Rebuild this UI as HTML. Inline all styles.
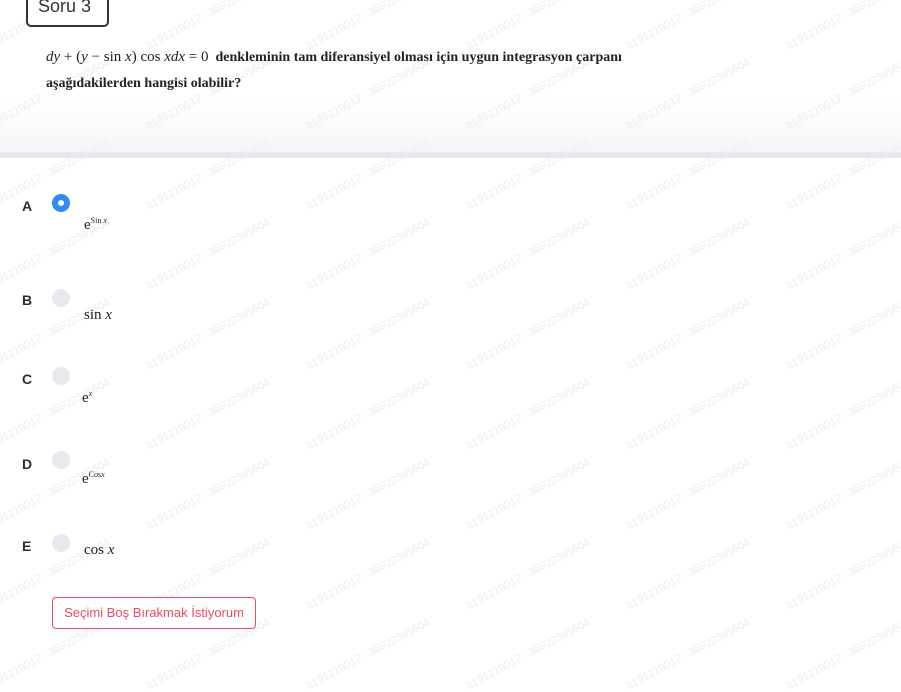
<!DOCTYPE html>
<html><head><meta charset="utf-8"><style>
*{margin:0;padding:0;box-sizing:border-box}
body{width:901px;height:672px;overflow:hidden;background:#fff;position:relative;font-family:"Liberation Sans",sans-serif}
.wm{position:absolute;color:#ededf0;font-size:11px;transform:rotate(-28deg);transform-origin:left bottom;white-space:nowrap;font-family:"Liberation Sans",sans-serif}
.soru{position:absolute;left:26px;top:-14px;width:83px;height:41px;border:2px solid #333;border-radius:5px;font-size:18px;color:#333;padding:8px 0 0 10px;background:#fff}
.q{position:absolute;left:46px;font-family:"Liberation Serif",serif;font-size:14px;color:#222;font-weight:bold;white-space:nowrap}
.m{font-weight:normal;font-size:15px}
.band{position:absolute;left:0;top:100px;width:901px;height:52px;background:linear-gradient(#fff,#f6f6fa)}
.band2{position:absolute;left:0;top:152px;width:901px;height:6px;background:#e7e7ef}
.let{position:absolute;left:22px;font-weight:bold;font-size:14px;color:#2d2d3a}
.rad{position:absolute;left:52px;width:18px;height:18px;border-radius:50%;background:#e8e8ee}
.rad.on{background:#2e8bf7}
.rad.on::after{content:"";position:absolute;left:6px;top:6px;width:6px;height:6px;border-radius:50%;background:#fff}
.ans{position:absolute;left:84px;font-family:"Liberation Serif",serif;font-size:15px;color:#222}
sup{font-size:8px}
.btn{position:absolute;left:52px;top:597px;width:204px;height:32px;border:1px solid #f04a5e;border-radius:4px;color:#f04a5e;font-size:13px;text-align:center;line-height:30px;background:rgba(255,255,255,.6)}
</style></head><body>
<div class="band"></div><div class="band2"></div>
<div id="w"></div>
<script>
var h='';var cols=[-10,150,310,470,630,790];
for(var r=-1;r<9;r++){for(var c=0;c<cols.length;c++){h+='<div class="wm" style="left:'+cols[c]+'px;top:'+(r*80+40)+'px">b191210012 - 36922385604</div>';}}
document.getElementById('w').outerHTML=h;
</script>
<div class="soru">Soru 3</div>
<div class="q" style="top:49px"><span class="m"><i>dy</i> + (<i>y</i> − sin <i>x</i>) cos <i>xdx</i> = 0</span> &nbsp;denkleminin tam diferansiyel olması için uygun integrasyon çarpanı</div>
<div class="q" style="top:76px">aşağıdakilerden hangisi olabilir?</div>

<div class="let" style="top:198px">A</div><div class="rad on" style="top:194px"></div>
<div class="ans" style="top:216px">e<sup>Sin <i>x</i></sup></div>
<div class="let" style="top:292px">B</div><div class="rad" style="top:289px"></div>
<div class="ans" style="top:307px">sin <i>x</i></div>
<div class="let" style="top:371px">C</div><div class="rad" style="top:367px"></div>
<div class="ans" style="top:389px;left:82px">e<sup><i>x</i></sup></div>
<div class="let" style="top:456px">D</div><div class="rad" style="top:451px"></div>
<div class="ans" style="top:470px;left:82px">e<sup>Cos<i>x</i></sup></div>
<div class="let" style="top:538px">E</div><div class="rad" style="top:534px"></div>
<div class="ans" style="top:542px">cos <i>x</i></div>
<div class="btn">Seçimi Boş Bırakmak İstiyorum</div>
</body></html>
